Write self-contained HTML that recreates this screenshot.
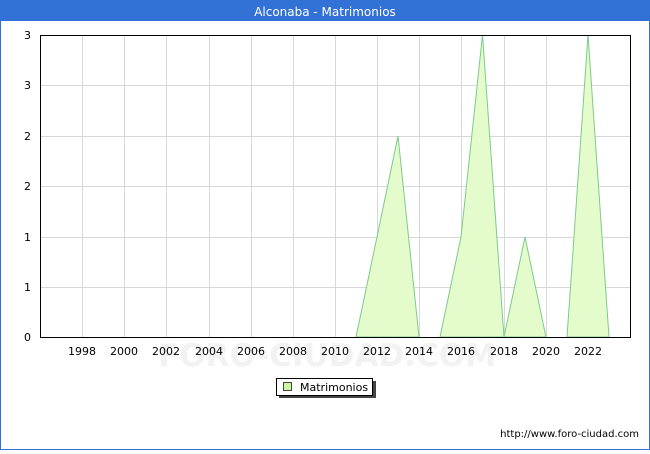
<!DOCTYPE html>
<html><head><meta charset="utf-8"><style>
body{margin:0;width:650px;height:450px;overflow:hidden;background:#fff;font-family:"DejaVu Sans","Liberation Sans",sans-serif}
</style></head><body>
<svg width="650" height="450" xmlns="http://www.w3.org/2000/svg" font-family="DejaVu Sans, Liberation Sans, sans-serif">
<rect x="0" y="0" width="650" height="450" fill="#fff"/>
<rect x="0.5" y="0.5" width="649" height="449" fill="none" stroke="#3272d6" stroke-width="1"/>
<rect x="0" y="0" width="650" height="21" fill="#3272d6"/>
<text x="325" y="16" text-anchor="middle" font-size="12" fill="#fff">Alconaba - Matrimonios</text>
<g stroke="#d8d8d8" stroke-width="1">
<line x1="82.5" y1="35" x2="82.5" y2="337"/><line x1="124.5" y1="35" x2="124.5" y2="337"/><line x1="166.5" y1="35" x2="166.5" y2="337"/><line x1="209.5" y1="35" x2="209.5" y2="337"/><line x1="251.5" y1="35" x2="251.5" y2="337"/><line x1="293.5" y1="35" x2="293.5" y2="337"/><line x1="335.5" y1="35" x2="335.5" y2="337"/><line x1="377.5" y1="35" x2="377.5" y2="337"/><line x1="419.5" y1="35" x2="419.5" y2="337"/><line x1="461.5" y1="35" x2="461.5" y2="337"/><line x1="504.5" y1="35" x2="504.5" y2="337"/><line x1="546.5" y1="35" x2="546.5" y2="337"/><line x1="588.5" y1="35" x2="588.5" y2="337"/>
<line x1="40" y1="85.5" x2="630" y2="85.5"/><line x1="40" y1="136.5" x2="630" y2="136.5"/><line x1="40" y1="186.5" x2="630" y2="186.5"/><line x1="40" y1="237.5" x2="630" y2="237.5"/><line x1="40" y1="287.5" x2="630" y2="287.5"/>
</g>
<text x="327" y="366" text-anchor="middle" font-size="31" fill="#f2f2f2" font-weight="bold">FORO-CIUDAD.COM</text>
<g fill="#e4fccc" stroke="#7ccb8a" stroke-width="1">
<polygon points="356,337 377,237 398,136 419,337"/>
<polygon points="440,337 461,237 482.5,35 504,337"/>
<polygon points="504,337 525,237 546,337"/>
<polygon points="567,337 588,35 609,337"/>
</g>
<rect x="40.5" y="35.5" width="590" height="302" fill="none" stroke="#000" stroke-width="1"/>
<g font-size="11" fill="#000" text-anchor="end">
<text x="31" y="39">3</text><text x="31" y="89">3</text><text x="31" y="140">2</text><text x="31" y="190">2</text><text x="31" y="241">1</text><text x="31" y="291">1</text><text x="31" y="341">0</text>
</g>
<g font-size="11" fill="#000" text-anchor="middle">
<text x="82" y="355">1998</text><text x="124" y="355">2000</text><text x="166" y="355">2002</text><text x="209" y="355">2004</text><text x="251" y="355">2006</text><text x="293" y="355">2008</text><text x="335" y="355">2010</text><text x="377" y="355">2012</text><text x="419" y="355">2014</text><text x="461" y="355">2016</text><text x="504" y="355">2018</text><text x="546" y="355">2020</text><text x="588" y="355">2022</text>
</g>
<rect x="279" y="381" width="97" height="17" fill="#444"/>
<rect x="276.5" y="378.5" width="96" height="17" fill="#fff" stroke="#000"/>
<rect x="283.5" y="382.5" width="8" height="8" fill="#ccf5a0" stroke="#444"/>
<text x="300" y="391" font-size="11" fill="#000">Matrimonios</text>
<text x="639" y="437" text-anchor="end" font-size="10" fill="#000">http://www.foro-ciudad.com</text>
</svg>
</body></html>
